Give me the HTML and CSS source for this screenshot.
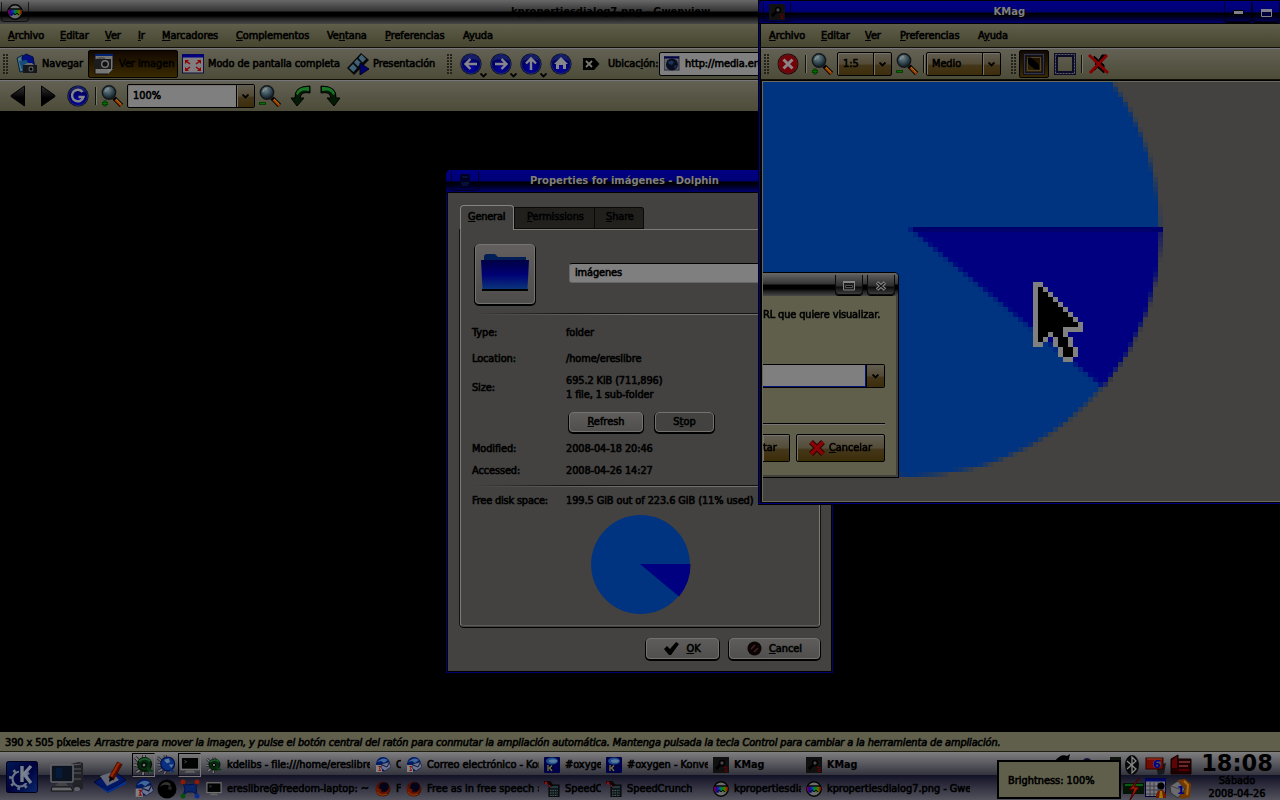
FILE: index.html
```html
<!DOCTYPE html>
<html lang="es">
<head>
<meta charset="utf-8">
<title>Escritorio</title>
<link rel="stylesheet" href="styles.css">
</head>
<body>
<svg class="defs" width="0" height="0">
  <defs>
    <radialGradient id="gBlue" cx=".5" cy=".75" r=".75"><stop offset="0" stop-color="#0606a0"/><stop offset=".6" stop-color="#000068"/><stop offset="1" stop-color="#00003a"/></radialGradient>
    <linearGradient id="gFolder" x2="0" y2="1"><stop offset="0" stop-color="#000044"/><stop offset=".5" stop-color="#000074"/><stop offset="1" stop-color="#0a347c"/></linearGradient>
    <linearGradient id="gBlack" x2="0" y2="1"><stop offset="0" stop-color="#333"/><stop offset=".6" stop-color="#000"/></linearGradient>
    <linearGradient id="gRain"><stop offset="0" stop-color="#803"/><stop offset=".2" stop-color="#20a"/><stop offset=".45" stop-color="#068"/><stop offset=".6" stop-color="#080"/><stop offset=".8" stop-color="#660"/><stop offset="1" stop-color="#800"/></linearGradient>
    <radialGradient id="gLens" cx=".4" cy=".3" r=".7"><stop offset="0" stop-color="#75858b"/><stop offset=".6" stop-color="#304650"/><stop offset="1" stop-color="#10191e"/></radialGradient>
    <linearGradient id="gK" x2="1" y2="1"><stop offset="0" stop-color="#001a55"/><stop offset=".5" stop-color="#00003e"/><stop offset="1" stop-color="#0a2a6c"/></linearGradient>
  </defs>
  <symbol id="mag" viewBox="0 0 22 22"><path d="M13 13l7.500 7.500" stroke="#000" stroke-width="4.500"/><path d="M14.500 14.500l6 6" stroke="#a04000" stroke-width="2.500"/><path d="M15 14l5 5" stroke="#a88020" stroke-width=".8"/><circle cx="8" cy="7.500" r="6.700" fill="url(#gLens)" stroke="#14181a" stroke-width="1.400"/><path d="M4 7q0-3 4-4" stroke="#8a979c" fill="none"/></symbol>
  <symbol id="magp" viewBox="0 0 22 22"><use href="#mag"/><path d="M4 15.500v6M1 18.500h6" stroke="#003800" stroke-width="3"/><path d="M4 16v5M1.500 18.500h5" stroke="#007000" stroke-width="1"/></symbol>
  <symbol id="magm" viewBox="0 0 22 22"><use href="#mag"/><path d="M0 18.500h7" stroke="#003800" stroke-width="2.600"/><path d="M1 18.500h5" stroke="#007000" stroke-width="1"/></symbol>
  <symbol id="orb" viewBox="0 0 22 22"><circle cx="11" cy="11" r="10.600" fill="#06061c"/><circle cx="11" cy="11" r="9.500" fill="url(#gBlue)" stroke="#1c2a78" stroke-width="1"/><path d="M3 8q2-6 8-6t8 6q-8-4-16 0z" fill="#2c3c80" opacity=".5"/></symbol>
  <symbol id="back" viewBox="0 0 22 22"><use href="#orb"/><path d="M17 11H6M10.500 6l-5 5 5 5" fill="none" stroke="#85858c" stroke-width="2.400"/></symbol>
  <symbol id="fwd" viewBox="0 0 22 22"><use href="#orb"/><path d="M5 11h11M11.500 6l5 5-5 5" fill="none" stroke="#85858c" stroke-width="2.400"/></symbol>
  <symbol id="up" viewBox="0 0 22 22"><use href="#orb"/><path d="M11 17V6M6 10.500l5-5 5 5" fill="none" stroke="#85858c" stroke-width="2.400"/></symbol>
  <symbol id="home" viewBox="0 0 22 22"><use href="#orb"/><path d="M11 4l7 7h-2v5h-3v-4h-4v4H6v-5H4z" fill="#85858c"/></symbol>
  <symbol id="reload" viewBox="0 0 22 22"><use href="#orb"/><path d="M15.500 7A5.800 5.800 0 1 0 16.500 12H11.500" fill="none" stroke="#85858c" stroke-width="2.400"/></symbol>
  <symbol id="down" viewBox="0 0 7 5"><path d="M.5 .5L3.500 3.500 6.500 .5" fill="none" stroke="#000" stroke-width="1.900"/></symbol>
  <symbol id="globe" viewBox="0 0 16 16"><rect x="0" y="0" width="15" height="14" fill="#626266" stroke="#25253c"/><path d="M0 1.500h15" stroke="#00004c" stroke-width="2"/><circle cx="8" cy="8.500" r="6" fill="#090d20"/><path d="M4 6q3-3 6 0l-2 3-3-1zM10 10l3-1-2 4z" fill="#1c3456"/></symbol>
  <symbol id="rain" viewBox="0 0 16 16"><circle cx="8" cy="8" r="7.200" fill="#6c6c6c" stroke="#050505" stroke-width="1.500"/><path d="M1 5.500h14v3.500q-2 3-4.500 2.500L8 10l-3 2q-3 0-4-3z" fill="url(#gRain)"/><path d="M1 5h14" stroke="#000" stroke-width="1.400"/><path d="M4 11l2.500-2 1.500 2 2-2 2 2" stroke="#000" fill="none" stroke-width="1"/></symbol>
  <symbol id="gear" viewBox="0 0 16 16"><path d="M1 2l4 4M0 8l5 1M2 14l4-3M7 16l1-4M8 0l0 4M13 14l-3-4" stroke="#111" stroke-width="2.600"/><path d="M1 2l4 4M0 8l5 1M2 14l4-3M7 16l1-4M8 0l0 4M13 14l-3-4" stroke="#77777c" stroke-width="1.600"/><circle cx="8.500" cy="7.500" r="5.500" fill="#072a0e" stroke="#031006"/><path d="M4 5q5-4 9 0" stroke="#1c5a2c" stroke-width="1.500" fill="none"/><circle cx="8" cy="8" r="1.700" fill="#6d776f" stroke="#000"/><path d="M10 9l6 4-5 1z" fill="#0a3a12"/></symbol>
  <symbol id="gearb" viewBox="0 0 16 16"><path d="M0 2l5 4M0 8l5 1M1 14l5-3M6 16l2-4M7 0v4M12 14l-2-4" stroke="#181820" stroke-width="2.600"/><path d="M0 2l5 4M0 8l5 1M1 14l5-3M6 16l2-4M7 0v4M12 14l-2-4" stroke="#686878" stroke-width="1.600"/><circle cx="9" cy="7.500" r="5.800" fill="#0b2f80" stroke="#001048"/><path d="M6 4l4-1 1 3-3 1zM10 8l4 0-2 3z" fill="#57779e"/><path d="M11 11l4 3-3 1z" fill="#06347c"/></symbol>
  <symbol id="mon" viewBox="0 0 18 16"><rect x="1" y="1" width="16" height="11" fill="#020404" stroke="#707070" stroke-width="1.400"/><path d="M4 4l2 1-2 1" stroke="#556" fill="none" stroke-width=".7"/><path d="M6 13h6l2 2H4z" fill="#646464"/></symbol>
  <symbol id="mailg" viewBox="0 0 16 16"><circle cx="8" cy="7" r="7" fill="#001b63"/><path d="M2 5q6-6 11-2l-4 3-3-2z" fill="#40669a"/><rect x="1" y="8" width="6" height="7" fill="#828282"/><path d="M3.500 9.500h2l-1 2 1 2h-2" fill="none" stroke="#a00000"/><path d="M7 7l7-2 2 5-6 4-4-3z" fill="#6c7590" stroke="#101840" stroke-width=".6"/><path d="M7 8l5 2 2-4" fill="none" stroke="#101840"/></symbol>
  <symbol id="fox" viewBox="0 0 16 16"><circle cx="8" cy="8" r="7.500" fill="#4a1200"/><circle cx="9" cy="6" r="4.800" fill="#03031a"/><path d="M1 4q1 5 6 4l-2 3q6 3 9-4-1 8-7 8T1 9z" fill="#6d1600"/><path d="M2 11q4 5 10 2" stroke="#8a4000" fill="none"/></symbol>
  <symbol id="konv" viewBox="0 0 16 16"><rect width="16" height="16" rx="1" fill="#000048"/><ellipse cx="8" cy="4" rx="6" ry="3.500" fill="#1f4c8e"/><ellipse cx="9" cy="4" rx="4" ry="1.800" fill="#5a7c9c"/><path d="M4 8v6M8 8.500L5.500 11 8 14" stroke="#747430" stroke-width="1.300" fill="none"/></symbol>
  <symbol id="calc" viewBox="0 0 16 16"><rect x="5" y="4" width="10" height="12" fill="#101b1e" stroke="#000"/><path d="M6 6h8" stroke="#22383e" stroke-width="2"/><path d="M6 9.500h8M6 12h8M6 14.500h8" stroke="#4c5658" stroke-dasharray="1.500 1"/><path d="M0 1h5l3 4" stroke="#100505" stroke-width="3.500" fill="none"/><circle cx="2" cy="2" r="1.500" fill="#901010"/><circle cx="5.500" cy="5" r="1" fill="#901010"/></symbol>
  <symbol id="kmag" viewBox="0 0 16 16"><rect width="16" height="16" fill="#101010"/><circle cx="9" cy="6" r="2.400" fill="#474747" stroke="#000" stroke-width="1.500"/><path d="M7 8l-4 4" stroke="#000" stroke-width="3"/><path d="M11 10.500h3v2h-2v2h3" fill="none" stroke="#600000"/></symbol>
  <symbol id="cross" viewBox="0 0 16 16"><path d="M2 2l12 12M14 2L2 14" stroke="#2b0000" stroke-width="5.500"/><path d="M2 2l12 12M14 2L2 14" stroke="#8a0404" stroke-width="3.400"/></symbol>
</svg>

<main class="desktop">
  <section class="gwen">
    <header class="title gray"><span class="appbtn"><svg width="16" height="16"><use href="#rain"/></svg></span><b>kpropertiesdialog7.png - Gwenview</b></header>
    <nav class="menu gmenu"><span><u>A</u>rchivo</span><span><u>E</u>ditar</span><span><u>V</u>er</span><span><u>I</u>r</span><span><u>M</u>arcadores</span><span><u>C</u>omplementos</span><span>Ve<u>n</u>tana</span><span><u>P</u>referencias</span><span>A<u>y</u>uda</span></nav>
    <div class="bar bar1">
      <i class="grip"></i>
      <svg width="22" height="22"><path d="M1 5l6-3 2 16-5 1z" fill="#4c7785" stroke="#081c38"/><path d="M6 4l4-3 7 3 2 12-12 3z" fill="#001080" stroke="#000b40"/><path d="M3 8l8-1 3 12-7 1z" fill="#154d7a"/><rect x="7" y="12" width="14" height="8" fill="#15171a"/><path d="M8 12l3-2h5l2 2z" fill="#6b6b6b"/><circle cx="15" cy="16" r="3" fill="#666" stroke="#222"/><circle cx="15" cy="16" r="1.500"/></svg>
      <span>Navegar</span>
      <div class="pressed"><svg width="20" height="22"><path d="M1 1h18v14l-5 6H1z" fill="#767674" stroke="#11111c"/><path d="M1 2h18" stroke="#002070" stroke-width="2"/><rect x="0" y="6" width="17" height="10" fill="#1c1c1c"/><path d="M2 6l3-2h5l2 2z" fill="#555"/><circle cx="11" cy="11" r="4" fill="#777"/><circle cx="11" cy="11" r="2.600" fill="#111"/><path d="M14 21v-5h5z" fill="#808080"/></svg><span>Ver imagen</span></div>
      <svg width="22" height="20"><rect x=".5" y=".5" width="21" height="18.500" fill="#807e80" stroke="#101040"/><path d="M0 2h22" stroke="#000080" stroke-width="3"/><path d="M3 6h4l-4 4zM19 6h-4l4 4zM3 17h4l-4-4zM19 17h-4l4-4z" fill="#8d0000"/><path d="M4 7l4 3M18 7l-4 3M4 16l4-3M18 16l-4-3" stroke="#8d0000" stroke-width="1.500"/></svg>
      <span>Modo de pantalla completa</span>
      <svg width="23" height="22"><path d="M0 15L14 0l8 7L7 22z" fill="#080808"/><path d="M2 15l4-4 4 4-3.500 4zM7 9.500l3-3.500 4 4-3 3.500zM11.500 5l3-3.500L19 6l-3.500 3.500z" fill="#3f6277"/><path d="M13 10l9 6-9 6z" fill="#00006a" stroke="#000020"/></svg>
      <span>Presentación</span>
      <i class="grip"></i>
      <svg width="27" height="27" class="nav"><use href="#back" y="2" width="22" height="22"/><use href="#down" x="20" y="22" width="7" height="5"/></svg>
      <svg width="27" height="27" class="nav"><use href="#fwd" y="2" width="22" height="22"/><use href="#down" x="20" y="22" width="7" height="5"/></svg>
      <svg width="27" height="27" class="nav"><use href="#up" y="2" width="22" height="22"/><use href="#down" x="20" y="22" width="7" height="5"/></svg>
      <svg width="22" height="22"><use href="#home"/></svg>
      <svg width="17" height="12"><path d="M0 0h11l5.500 6-5.500 6H0z"/><path d="M3 3l6 6M9 3L3 9" stroke="#787870" stroke-width="1.800"/></svg>
      <span>Ubicac<u>i</u>ón:</span>
      <div class="url"><svg width="16" height="16"><use href="#globe"/></svg><span>http://media.ereslibre.es</span></div>
    </div>
    <div class="bar bar2">
      <svg width="16" height="22"><path d="M14.500 1v20L1 11.500v-1z" fill="url(#gBlack)" stroke="#000"/></svg>
      <svg width="16" height="22"><path d="M1.500 1v20L15 11.500v-1z" fill="url(#gBlack)" stroke="#000"/></svg>
      <svg width="22" height="22"><use href="#reload"/></svg>
      <i class="sep"></i>
      <svg width="22" height="22"><use href="#magp"/></svg>
      <div class="combo white"><span>100%</span><em><svg width="7" height="5"><use href="#down"/></svg></em></div>
      <svg width="22" height="22"><use href="#magm"/></svg>
      <svg width="21" height="22"><path d="M20 1v7q-9-2-10 5h4L7 21 1 13h4Q4 1 20 1z" fill="#031a05" stroke="#000"/><path d="M19 2v4q-9-2-11 4l-2-1Q8 1 19 2z" fill="#187523"/></svg>
      <svg width="21" height="22"><path d="M1 1v7q9-2 10 5H7l7 8 6-8h-4Q17 1 1 1z" fill="#031a05" stroke="#000"/><path d="M2 2v4q9-2 11 4l2-1Q13 1 2 2z" fill="#187523"/></svg>
    </div>
    <div class="canvas"></div>
    <footer class="status"><span>390 x 505 píxeles</span><i>Arrastre para mover la imagen, y pulse el botón central del ratón para conmutar la ampliación automática. Mantenga pulsada la tecla Control para cambiar a la herramienta de ampliación.</i></footer>
  </section>

  <section class="props">
    <header class="title blue"><span class="appbtn"><svg width="16" height="16"><rect x="3" y="1" width="10" height="14" rx="2" fill="#000024"/><path d="M5 4h6M4 10h8M5 12h6" stroke="#08204a"/></svg></span><b>Properties for imágenes - Dolphin</b></header>
    <div class="tabs"><span class="on"><u>G</u>eneral</span><span><u>P</u>ermissions</span><span><u>S</u>hare</span></div>
    <div class="pane">
      <div class="head">
        <div class="foldbtn"><svg width="50" height="42"><path d="M4 5q0-3 3-3h8l3 3h28v6H4z" fill="#001e55"/><path d="M1 8h48l-1.500 29h-45z" fill="url(#gFolder)"/><path d="M2 38h46" stroke="#000" stroke-width="2"/></svg></div>
        <div class="name">imágenes</div>
      </div>
      <hr>
      <div class="facts">
        <span>Type:</span><span>folder</span>
        <span>Location:</span><span>/home/ereslibre</span>
        <span>Size:</span><span class="two">695.2 KiB (711,896)<br>1 file, 1 sub-folder</span>
        <span></span><div class="pair"><a class="btn"><span><u>R</u>efresh</span></a><a class="btn off"><span>S<u>t</u>op</span></a></div>
        <span>Modified:</span><span>2008-04-18 20:46</span>
        <span>Accessed:</span><span>2008-04-26 14:27</span>
      </div>
      <hr>
      <div class="facts disk"><span>Free disk space:</span><span>199.5 GiB out of 223.6 GiB (11% used)</span></div>
      <svg class="pie" width="101" height="100"><circle cx="49.500" cy="49.500" r="49.400" fill="#003380"/><path d="M49 49H99.500A50 50 0 0 1 88 81.500z" fill="#000080"/></svg>
    </div>
    <div class="actions">
      <a class="btn"><svg width="15" height="14"><path d="M0 7l3-3 3 3 6-7 3 2-8 11H5z"/></svg><span><u>O</u>K</span></a>
      <a class="btn"><svg width="15" height="15"><circle cx="7.500" cy="7.500" r="7" fill="#0b0404"/><path d="M4 8l4-4M7 11l4-4" stroke="#452424" stroke-width="1.500"/></svg><span><u>C</u>ancel</span></a>
    </div>
  </section>

  <section class="kwin">
    <header class="title blue"><span class="appbtn"><svg width="16" height="16"><use href="#kmag"/></svg></span><b>KMag</b><span class="wbtn"><svg width="26" height="20"><path d="M8.500 8.500h10v4h-10z" fill="#80808a" stroke="#000"/></svg></span><span class="wbtn"><svg width="26" height="20"><path d="M8.500 7.500h10v7h-10z" fill="#00003c" stroke="#80808a"/><path d="M8 8.500h11" stroke="#80808a" stroke-width="3"/></svg></span></header>
    <nav class="menu kmenu"><span><u>A</u>rchivo</span><span><u>E</u>ditar</span><span><u>V</u>er</span><span><u>P</u>referencias</span><span>A<u>y</u>uda</span></nav>
    <div class="bar kbar">
      <i class="grip"></i>
      <svg width="22" height="22"><circle cx="11" cy="11" r="10.500" fill="#250000"/><circle cx="11" cy="11" r="9.300" fill="#740008" stroke="#551c1c"/><path d="M6.500 6.500l9 9M15.500 6.500l-9 9" stroke="#8b8585" stroke-width="3"/></svg>
      <i class="sep"></i>
      <svg width="22" height="22"><use href="#magp"/></svg>
      <div class="combo"><span>1:5</span><em><svg width="7" height="5"><use href="#down"/></svg></em></div>
      <svg width="22" height="22"><use href="#magm"/></svg>
      <i class="sep"></i>
      <div class="combo wide"><span>Medio</span><em><svg width="7" height="5"><use href="#down"/></svg></em></div>
      <i class="grip"></i>
      <div class="pressed"><svg width="22" height="22"><rect x="1.500" y="1.500" width="19" height="19" fill="none" stroke="#11111c" stroke-width="3"/><rect x="1.500" y="1.500" width="19" height="19" fill="none" stroke="#5b5b70" stroke-dasharray="1 1"/><rect x="4.500" y="4.500" width="13" height="13" fill="none" stroke="#4d4537"/><path d="M5 5h3l7 6 1 5h-4l-6-5z" stroke="#000"/></svg></div>
      <svg width="22" height="22"><rect x="2" y="2" width="18" height="18" fill="none" stroke="#0c0c24" stroke-width="4"/><rect x="1.500" y="1.500" width="19" height="19" fill="none" stroke="#606074" stroke-dasharray="2 1"/></svg>
      <i class="sep"></i>
      <svg width="22" height="22"><path d="M6 3l10 9v8l-8-7zM14 2h4l-6 9-5 6-2 0z" stroke="#000"/><path d="M1 2l19 18M19 2L2 20" stroke="#850000" stroke-width="3"/></svg>
    </div>
    <div class="view">
      <canvas id="lens" width="104" height="84"></canvas>
      <div class="ask">
        <header class="title gray"><span class="wbtn"><svg width="26" height="20"><path d="M7.500 7h11v8h-11z" fill="#1c1c1c" stroke="#858585"/><path d="M7 7h12" stroke="#858585" stroke-width="2"/><path d="M9.500 10.500h7v2h-7z" fill="#000" stroke="#666" stroke-width=".8"/></svg></span><span class="wbtn"><svg width="26" height="20"><path d="M9 7.500l8 7M17 7.500l-8 7" stroke="#888" stroke-width="3.600"/><path d="M9.500 8l7 6M16.500 8l-7 6" stroke="#111" stroke-width="1.100"/></svg></span></header>
        <p>RL que quiere visualizar.</p>
        <div class="field"><em><svg width="7" height="5"><use href="#down"/></svg></em></div>
        <hr>
        <div class="row"><a class="gold"><span>tar</span></a><a class="gold"><svg width="16" height="16"><use href="#cross"/></svg><span><u>C</u>ancelar</span></a></div>
      </div>
    </div>
  </section>

  <footer class="panel">
    <svg width="32" height="32"><rect x=".5" y=".5" width="31" height="31" rx="2" fill="url(#gK)" stroke="#000018"/><circle cx="14" cy="18" r="7.500" fill="none" stroke="#697486" stroke-width="2.200"/><circle cx="14" cy="18" r="9.500" fill="none" stroke="#697486" stroke-width="3" stroke-dasharray="2.600 4.860"/><path d="M16 4v15h9" stroke="#00083a" stroke-width="6" fill="none"/><path d="M16 5v16M25 5l-7 8 7 9" fill="none" stroke="#77808e" stroke-width="3.400"/></svg>
    <svg width="34" height="32"><path d="M21 3l8-2 4 1v26l-10 1z" fill="#202226"/><path d="M22 4l9-1M22 8h9M22 12h9M24 18h7" stroke="#5b5b60"/><rect x="1" y="4" width="22" height="17" rx="1" fill="#0b1220" stroke="#65656a" stroke-width="1.500"/><path d="M6 7h6v10H6z" fill="#061a3a"/><path d="M8 22h8l2 3H5z" fill="#444"/><path d="M2 26h19l2 4H1z" fill="#67676c" stroke="#111"/><ellipse cx="27" cy="28" rx="3" ry="2" fill="#60606a"/></svg>
    <svg width="34" height="32"><path d="M1 21L21 10l12 9-18 12z" fill="#001765" stroke="#00062c"/><path d="M1 22l14 8 18-10v3L15 32z" fill="#05318c"/><path d="M7 15l12-4 7 8-12 6z" fill="#646878"/><path d="M27 2L18 18" stroke="#4e0c00" stroke-width="6"/><path d="M26 2l-8 14" stroke="#962800" stroke-width="2.500"/><path d="M17 15l-1 6 5-3z" fill="#000"/></svg>
    <div class="quick">
      <a class="on"><svg width="20" height="20"><use href="#gear"/></svg></a><a><svg width="19" height="19"><use href="#gearb"/></svg></a><a class="on"><svg width="20" height="20"><use href="#mon"/></svg></a>
      <a><svg width="20" height="19"><use href="#mailg"/></svg></a><a><svg width="20" height="20"><circle cx="10" cy="10" r="9.500"/><path d="M3 8q2-5 7-5 5 1 3 4-6-3-10 1z" fill="#333"/><circle cx="13" cy="9" r="2" fill="#222"/></svg></a><a><svg width="20" height="20"><path d="M3 4l4 2 8-1 3-2-2 5 1 8-4-3H7l-4 4 2-7z" fill="#0a2468" stroke="#001048"/><circle cx="3" cy="3" r="2.500" fill="#8c1a08"/><circle cx="17" cy="3" r="2.500" fill="#8c1a08"/><circle cx="3" cy="17" r="2.500" fill="#085010"/><circle cx="17" cy="17" r="2.500" fill="#0c2c90"/></svg></a>
    </div>
    <div class="tasks">
      <a><svg><use href="#gear"/></svg><span>kdelibs - file:///home/ereslibre/</span></a><a><svg><use href="#mailg"/></svg><span>C</span></a><a><svg><use href="#mailg"/></svg><span>Correo electrónico - Kontact</span></a><a><svg><use href="#konv"/></svg><span>#oxygen</span></a><a><svg><use href="#konv"/></svg><span>#oxygen - Konversation</span></a><a><svg><use href="#kmag"/></svg><b>KMag</b></a><a><svg><use href="#kmag"/></svg><b>KMag</b></a>
      <a><svg><use href="#mon"/></svg><span>ereslibre@freedom-laptop: ~</span></a><a><svg><use href="#fox"/></svg><span>F</span></a><a><svg><use href="#fox"/></svg><span>Free as in free speech ›</span></a><a><svg><use href="#calc"/></svg><span>SpeedCr</span></a><a><svg><use href="#calc"/></svg><span>SpeedCrunch</span></a><a><svg><use href="#rain"/></svg><span>kpropertiesdialog</span></a><a><svg><use href="#rain"/></svg><span>kpropertiesdialog7.png - Gwen</span></a>
    </div>
    <svg class="hid" width="66" height="10"><path d="M0 8q6-8 12-5l3-2-2 9H0z"/><path d="M28 7q4-4 8 0z" fill="#101030"/><path d="M55 4h11v6H55z" fill="#101510"/></svg>
    <div class="tray">
      <svg width="22" height="22"><ellipse cx="9" cy="11" rx="7" ry="10" fill="#070909"/><path d="M4 7l9 8-4 4V3l4 4-9 8" fill="none" stroke="#888" stroke-width="1.300"/></svg>
      <svg width="22" height="22"><path d="M11 12l10-3-2 11-6 1z" fill="#17191c"/><rect x="1" y="4" width="17" height="11" fill="#750b00" stroke="#2c0000"/><path d="M2 5h15" stroke="#9a3c20"/><circle cx="12" cy="10" r="4" fill="#4a4a60"/><text x="8" y="14" class="num">6</text></svg>
      <svg width="22" height="22"><path d="M1 5l7-4v4h13v15H1z" fill="#200000" stroke="#100000"/><path d="M2 6l5-4v12H2z" fill="#5b0505"/><path d="M9 8h11M9 12h9" stroke="#7c3a30" stroke-width="1.500"/><path d="M9 16h10" stroke="#550000" stroke-width="2"/></svg>
      <svg width="22" height="22"><rect x="0" y="5" width="21" height="11" fill="#041506"/><path d="M2 7h18" stroke="#075c10" stroke-width="2"/><path d="M16 0L6 12l5-1-4 11 9-13h-5z" fill="#9a1b00" stroke="#400"/></svg>
      <svg width="22" height="22"><rect x=".5" y=".5" width="20" height="18" fill="#76767c" stroke="#000035"/><path d="M0 2h21" stroke="#000868" stroke-width="3"/><path d="M1 8h20M1 12h20M1 16h20M5 4v14M9 4v14M13 4v14M17 4v14" stroke="#333345" stroke-width=".8"/><circle cx="16" cy="8" r="3.500"/><path d="M11 20q0-8 5-8t5 8z" fill="#751800"/><path d="M15 13h2l1 7h-4z" fill="#9b7800"/></svg>
      <svg width="22" height="22"><path d="M8 2l7-1 6 5-1 13-8 2-4-3z" fill="#773800"/><path d="M14 3l4 4-1 10" stroke="#a07020" fill="none" stroke-width="2"/><path d="M0 8l8-5 7 8-7 9-7-5z" fill="#6b6b70" stroke="#333"/><path d="M1 8l8 3 5-1" stroke="#444" fill="none"/><text x="7" y="16" class="num">1</text></svg>
    </div>
    <div class="clock"><strong>18:08</strong><span>Sábado</span><span>2008-04-26</span></div>
  </footer>
  <div class="tip">Brightness: 100%</div>
</main>
<script src="lens.js"></script>
</body>
</html>
```

FILE: styles.css
```css
* { box-sizing: border-box; }
body { margin: 0; background: #000; overflow: hidden; font: 9.8px/12px "DejaVu Sans", sans-serif; color: #000; -webkit-text-stroke: .6px #000; }
svg { flex: none; display: block; }
.defs { position: absolute; }
u { text-decoration: underline; text-underline-offset: 1px; text-decoration-thickness: 1px; }
span, b, i { white-space: nowrap; }
.desktop { position: relative; width: 1280px; height: 800px; overflow: hidden; }

.title { position: relative; display: flex; align-items: center; height: 24px; }
.title b { font-size: 10px; letter-spacing: -.07px; -webkit-text-stroke: 0; }
.gray { background: linear-gradient(#686868, #343434 11px, #000 12px, #000 16px, #1c1c1c 18px, #484848); }
.blue { background: linear-gradient(#000084, #000074 11px, #000 12px, #000020 16px, #000070); }
.blue b { color: #808080; text-shadow: 1px 1px #000; }
.appbtn { width: 28px; height: 20px; display: flex; justify-content: center; align-items: center; border: 1px solid #000a; border-top: 0; border-radius: 0 0 4px 4px; }
.wbtn { height: 20px; border: 1px solid #000a; border-top: 0; border-radius: 0 0 4px 4px; box-shadow: 0 1px #000; }
.gray .wbtn { border-color: #0a0a0a; background: linear-gradient(#5a5a5a, #2c2c2c 11px, #0a0a0a 12px, #3c3c3c); }

.gwen { width: 1280px; height: 752px; display: flex; flex-direction: column; }
.gwen > .title { padding: 0 0 0 1px; }
.gwen > .title b { margin: 0 0 0 482px; letter-spacing: -.05px; }
.menu { display: grid; align-items: center; height: 24px; border-bottom: 1px solid #111008; background: linear-gradient(#5e5e4b, #46452f); }
.gmenu { padding-left: 8px; grid-template-columns: 52px 45px 33px 24px 74px 91px 58px 78px 60px; letter-spacing: -.07px; }
.bar { display: grid; align-items: center; height: 32px; border-top: 1px solid #77767a; border-bottom: 1px solid #111008; background: linear-gradient(#626154, #4d4c39); }
.bar1 { padding-left: 3px; grid-template-columns: 13px 26px 46px 94px 26px 139px 26px 74px 13px 30px 30px 30px 33px 25px 51px 110px; letter-spacing: -.07px; }
.bar2 { height: 31px; padding-left: 10px; border-bottom: 0; grid-template-columns: 30px 27px 28px 6px 26px 132px 31px 30px 30px; }
.grip { width: 5px; height: 20px; background: radial-gradient(circle at 1px 1px, #22211a 30%, #6a695c 40%, transparent 60%) 0 0 / 3px 3px; }
.sep { width: 2px; height: 18px; background: linear-gradient(90deg, #11110c 50%, #77776a 50%); }
.nav { margin-top: 1px; }
.pressed { display: flex; align-items: center; gap: 5px; width: 90px; height: 28px; padding-left: 5px; border: 1px solid #000; border-radius: 2px; background: linear-gradient(#120800, #3a2a00); color: #080400; }
.bar1 > .pressed { letter-spacing: -.05px; }
.url { display: flex; align-items: center; gap: 5px; height: 24px; padding-left: 4px; border: 1px solid #000; border-radius: 2px; background: #7f7f7f; overflow: hidden; }
.combo { display: flex; width: 55px; height: 24px; border: 1px solid #000; border-radius: 2px; background: linear-gradient(#625d51, #544b36 50%, #44361a 55%, #3c2e0b); align-items: center; box-shadow: inset 1px 1px #77736a; }
.combo span { flex: 1; padding-left: 5px; }
.combo em, .field em { width: 18px; height: 22px; display: flex; justify-content: center; align-items: center; border-left: 1px solid #000; box-shadow: inset 1px 0 #77736a; }
.wide { width: 75px; }
.white { width: 128px; background: #7f7f7f; }
.white em, .field em { background: linear-gradient(#625d51, #544b36 50%, #44361a 55%, #3c2e0b); }
.canvas { flex: 1; background: #000; }
.status { height: 20px; display: flex; align-items: center; gap: 6px; padding: 2px 0 0 5px; border-bottom: 1px solid #222214; background: #5f5f4c; }
.status span { width: 84px; letter-spacing: -.1px; }
.status i { letter-spacing: -.112px; }

.props { position: absolute; left: 446px; top: 170px; width: 387px; height: 503px; border: 1px solid #000070; border-top: 0; border-radius: 5px 5px 0 0; background: #434240; box-shadow: inset 1px -1px #000, inset -1px 0 #000; }
.props > .title { height: 23px; margin: 0 -1px; padding-left: 5px; border-radius: 5px 5px 0 0; border-bottom: 1px solid #000; }
.props > .title b { margin-left: 51px; }
.tabs { display: flex; align-items: flex-end; height: 36px; padding-left: 13px; }
.tabs span { height: 22px; padding: 3px 0 0 12px; background: #21201d; border: 1px solid #090909; color: #080808; width: 81px; letter-spacing: -.1px; }
.tabs span:last-child { width: 49px; padding-left: 11px; border-left: 0; border-radius: 0 3px 0 0; }
.tabs .on { position: relative; width: 54px; height: 25px; margin-bottom: -1px; padding: 5px 0 0 7px; background: #434240; border: 1px solid #85837e; border-bottom: 0; border-radius: 4px 4px 0 0; color: #000; letter-spacing: -.2px; }
.pane { margin: 0 12px 0 13px; height: 398px; padding: 0 12px 0 11px; border: 1px solid #7d7b76; border-bottom: 1px solid #444; border-radius: 0 4px 4px 4px; box-shadow: 0 1px #000, inset 0 -1px #5c5a55, -1px 0 #111, 1px 0 #111; }
.head { display: flex; height: 83px; padding: 14px 0 0 3px; gap: 34px; margin-right: -12px; }
.foldbtn { width: 60px; height: 60px; display: flex; justify-content: center; padding-top: 7px; border: 1px solid #74736f; border-radius: 4px; background: linear-gradient(#625f5e, #4e4d4b); box-shadow: 0 1px 0 1px #000; }
.name { width: 240px; height: 20px; margin-top: 19px; padding: 3px 5px; border: 1px solid #666; border-top-color: #000; border-radius: 3px; background: #7f7f7f; letter-spacing: -.1px; }
.pane hr { height: 2px; margin: 0; border: 0; background: linear-gradient(90deg, transparent, #111 30%, #111) 0 0 / 100% 1px no-repeat, linear-gradient(90deg, transparent, #75726d 50%) 0 1px / 100% 1px no-repeat; }
.facts { display: grid; grid-template-columns: 94px 1fr; align-items: center; height: 170px; padding-top: 5px; grid-template-rows: 26px 26px 32px 34px 22px 22px; letter-spacing: -.1px; }
.two { line-height: 14px; }
.pair { display: flex; gap: 12px; padding-left: 3px; padding-top: 2px; }
.btn { display: flex; align-items: center; justify-content: center; gap: 7px; height: 20px; width: 74px; border: 1px solid #74726e; border-radius: 4px; background: linear-gradient(#5e5d5b, #504f4d); box-shadow: 0 1px 0 1px #000; letter-spacing: 0; }
.pair .off { width: 59px; background: #434240; }
.disk { height: 28px; padding-top: 3px; grid-template-rows: 22px; letter-spacing: -.08px; }
.disk span:first-child { letter-spacing: -.18px; }
.pie { margin-left: 119px; }
.actions { display: flex; justify-content: flex-end; gap: 10px; padding: 11px 12px 0; }
.actions .btn { height: 21px; width: 73px; }
.actions .btn:last-child { width: 91px; }

.kwin { position: absolute; left: 758px; top: 0; width: 522px; height: 505px; padding: 0 0 1px 3px; border-bottom: 1px solid #000; background: linear-gradient(90deg, #000 1px, #000080 1px, #000080 2px, #000 2px); box-shadow: inset 0 -1px #000080; display: flex; flex-direction: column; }
.kwin > .title { margin-left: -2px; padding-left: 4px; border-top: 1px solid #000; border-radius: 4px 0 0 0; border-bottom: 1px solid #000; gap: 0; }
.kwin > .title b { width: 235px; margin: 0 0 0 203px; letter-spacing: 0; }
.kwin > .title .wbtn { flex: none; width: 28px; }
.kmenu { padding-left: 8px; grid-template-columns: 52px 44px 35px 78px 60px; letter-spacing: -.07px; }
.kbar { padding-left: 3px; grid-template-columns: 13px 28px 6px 26px 59px 27px 3px 85px 8px 35px 27px 7px 30px; letter-spacing: -.07px; }
.kbar .pressed { width: 30px; padding-left: 3px; }
.view { position: relative; height: 421px; margin: 1px 0 0 1px; border: 1px solid #6b6959; border-right: 0; background: #434240; overflow: hidden; }
#lens { display: block; width: 520px; height: 420px; image-rendering: pixelated; }
.ask { position: absolute; left: 0; top: 190px; width: 136px; height: 206px; border: 1px solid #000; border-left: 0; border-radius: 0 5px 0 0; background: #5f5f4c; box-shadow: inset -2px -2px #42423a; overflow: hidden; }
.ask .title { height: 23px; justify-content: flex-end; gap: 4px; padding-right: 3px; }
.ask .wbtn { width: 28px; }
.ask p { margin: 13px 0 0; height: 12px; letter-spacing: -.1px; white-space: nowrap; }
.field { display: flex; justify-content: flex-end; width: 122px; height: 24px; margin-top: 43px; border: 1px solid #000; border-left: 0; border-radius: 0 2px 2px 0; background: #7f7f7f; box-shadow: inset 0 -1px #001478; }
.field em { box-shadow: -1px 0 #001478; }
.ask hr { width: 122px; margin: 35px 0 9px; height: 2px; border: 0; background: linear-gradient(#000 50%, #77757a 50%); }
.row { display: flex; gap: 6px; }
.gold { display: flex; align-items: center; justify-content: center; gap: 4px; height: 28px; width: 89px; border: 1px solid #000; border-radius: 2px; background: linear-gradient(#635f54, #544c38 50%, #45371b 55%, #3c2d08); box-shadow: inset 1px 1px #77736a; }
.gold:first-child { width: 27px; border-left: 0; justify-content: flex-start; border-radius: 0 2px 2px 0; }

.panel { position: relative; display: grid; grid-template-columns: 44px 43px 39px 74px 917px 76px 80px; align-items: center; height: 48px; padding-left: 6px; background: linear-gradient(#7f7f80, #33333e 23px, #121226 23px, #53535d); }
.quick { display: grid; grid-template-columns: repeat(3, 23px); grid-template-rows: 24px 24px; }
.quick a { display: flex; align-items: center; justify-content: center; width: 23px; height: 24px; }
.quick .on { border: 1px solid #77777a; border-top-color: #000; border-left-color: #000; }
.tasks { display: grid; grid-template-columns: 169px 31px 138px 62px 107px 93px 182px; grid-template-rows: 24px 24px; }
.tasks a { display: flex; align-items: center; gap: 5px; min-width: 0; padding-right: 5px; overflow: hidden; }
.tasks svg { width: 16px; height: 16px; }
.tasks span { overflow: hidden; letter-spacing: -.02px; }
.tasks a:nth-child(7n) { padding-right: 18px; }
.tasks b { font-size: 9.6px; -webkit-text-stroke: .2px #000; }
.hid { position: absolute; left: 1055px; top: 1px; }
.tray { display: grid; grid-template-columns: 22px 25px 22px; grid-template-rows: 24px 24px; align-items: center; padding-top: 1px; }
.num { font: 700 11px "DejaVu Sans", sans-serif; fill: #000080; stroke: none; -webkit-text-stroke: 0; }
.clock { display: flex; flex-direction: column; align-items: center; width: 76px; height: 48px; }
.clock strong { font-size: 22.5px; line-height: 21px; -webkit-text-stroke: 0; }
.clock span { line-height: 13px; }
.tip { position: absolute; left: 997px; top: 760px; width: 124px; height: 39px; display: flex; align-items: center; padding: 2px 0 0 9px; border: 2px solid #000; background: #5f5f4c; letter-spacing: 0; white-space: nowrap; }
```

FILE: lens.js
```js
const ctx = document.getElementById("lens").getContext("2d");
ctx.fillStyle = "#434240";
ctx.fillRect(0, 0, 104, 84);

// Disk usage chart
ctx.fillStyle = "#003380";
ctx.beginPath();
ctx.arc(29.6, 29.2, 49.7, 0, Math.PI * 2);
ctx.fill();
ctx.fillStyle = "#000080";
ctx.beginPath();
ctx.moveTo(29, 29);
ctx.lineTo(80, 29);
ctx.arc(29.6, 29, 50, 0, Math.PI * 0.221);
ctx.closePath();
ctx.fill();
ctx.fillStyle = "#00006c";
ctx.fillRect(30, 29, 50, 1);

// Pointer: o = outline, x = body
const pointer = [
  "oo", "oxo", "oxxo", "oxxxo", "oxxxxo", "oxxxxxo", "oxxxxxxo", "oxxxxxxxo",
  "oxxxxxxxxo", "oxxxxxoooo", "oxxoxxo", "oxo oxxo", "oo  oxxo",
  "     oxxo", "     oxxo", "      oo"
];
pointer.forEach((row, y) => [...row].forEach((c, x) => {
  if (c === " ") return;
  ctx.fillStyle = c === "o" ? "#808080" : "#000";
  ctx.fillRect(54 + x, 40 + y, 1, 1);
}));
```
